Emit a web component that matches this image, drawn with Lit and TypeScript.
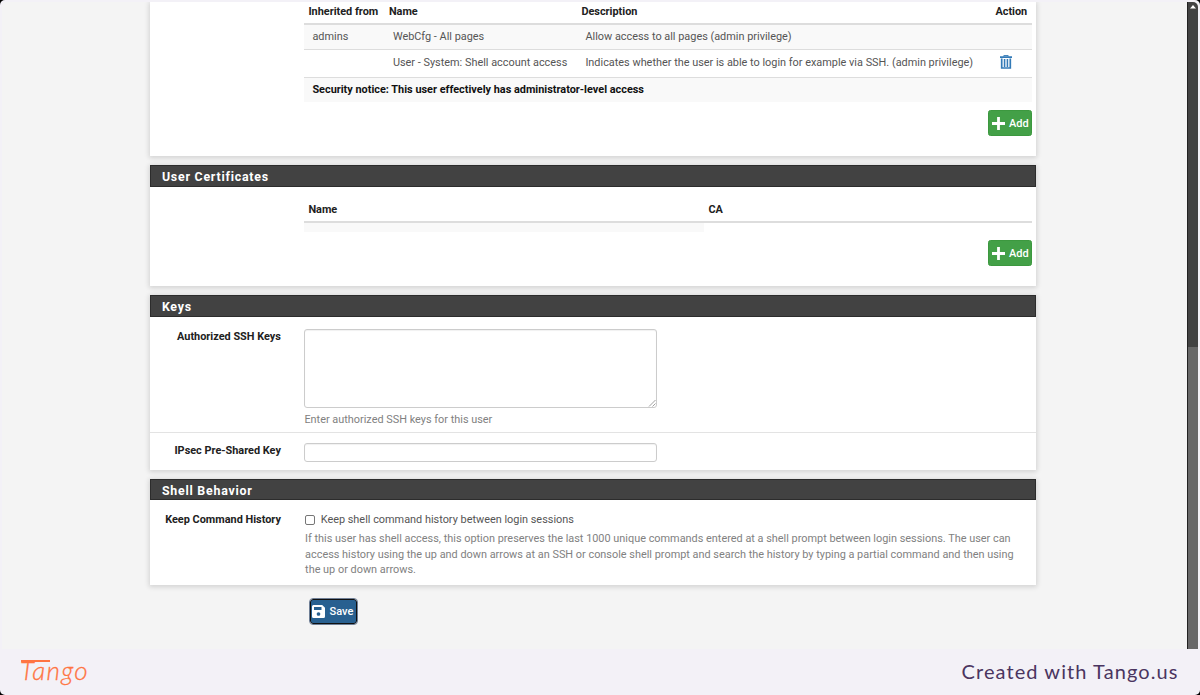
import { LitElement, html, css, svg } from "lit";
import { customElement, property } from "lit/decorators.js";

const plus = svg`<path d="M5.1 0h2.8v5.1H13v2.8H7.900V13H5.100V7.900H0V5.100h5.100z" fill="#fff"/>`;

@customElement("form-panel")
class FormPanel extends LitElement {
  @property() heading = "";
  static styles = css`
    :host { display: block; background: #fff; box-shadow: 0 1px 5px 1px rgba(0, 0, 0, 0.14); }
    .heading {
      box-sizing: border-box; height: 21.5px; background: #424242;
      border: 1px solid #2c2c2c; color: #fff; padding-left: 10.500px;
      font-size: 12.4px; font-weight: 700; line-height: 21px; letter-spacing: 0.76px;
    }
  `;
  render() {
    return html`${this.heading ? html`<div class="heading">${this.heading}</div>` : ""}<slot></slot>`;
  }
}

@customElement("add-button")
class AddButton extends LitElement {
  static styles = css`
    :host { display: block; }
    .btn {
      box-sizing: border-box; width: 44.500px; height: 26.500px; display: flex; align-items: center;
      padding: 0 0 0 3px; gap: 4px; border: 1px solid #3c983f; border-radius: 2.500px;
      background: #43a047; color: #fff; font: 500 11px Roboto, sans-serif; letter-spacing: 0.1px;
    }
    svg { width: 13px; height: 13px; display: block; flex: none; }
  `;
  render() {
    return html`<button class="btn"><svg viewBox="0 0 13 13">${plus}</svg>Add</button>`;
  }
}

@customElement("app-root")
class AppRoot extends LitElement {
  static styles = css`
    * { box-sizing: border-box; }
    :host { display: block; height: 695px; background: #000; font-family: Roboto, sans-serif; font-size: 10.9px; color: #555; }
    .frame { height: 695px; display: flex; flex-direction: column; background: #f3f1f7; border-radius: 5px; overflow: hidden; padding: 2px 2px 0; }
    .view { height: 647px; display: flex; background: #f4f4f4; border-radius: 5px 5px 0 0; overflow: hidden; }
    .page { flex: 1; padding-left: 148.400px; }
    .content { width: 886px; display: flex; flex-direction: column; }
    .p1 { height: 154px; margin-bottom: 9.300px; }
    .p2 { height: 121px; margin-bottom: 9px; }
    .p3 { height: 175px; margin-bottom: 8.500px; }
    .p4 { height: 106px; }
    .table { margin: 0 4px 0 154px; }
    .row { display: grid; grid-template-columns: 80.500px 192.500px 414px 1fr; height: 26px; align-items: center; border-top: 1px solid #ddd; padding-bottom: 1px; }
    .row > span { padding-left: 8px; white-space: nowrap; }
    .odd { background: #f9f9f9; }
    .head { height: 21px; color: #212121; font-weight: 700; border: 0; padding-bottom: 3px; }
    .head > span { padding-left: 4px; }
    .first { border-top: 2px solid #ddd; height: 26.300px; }
    .shell { height: 27.500px; padding-bottom: 3px; }
    .notice { display: flex; height: 25.500px; color: #111; font-weight: 700; }
    .trash { width: 12px; height: 14px; display: block; margin: 0 0 0 0.600px; }
    .actions { display: flex; justify-content: flex-end; padding: 7.500px 4px 0 0; }
    .certs { padding-top: 12px; }
    .certs .row { grid-template-columns: 400px 1fr; }
    .certs .head { height: 22.500px; padding: 0 0 1px; }
    .certs .none { height: 11px; padding: 0; background: none; border-top: 2px solid #ddd; align-items: stretch; }
    .field { display: grid; grid-template-columns: 130.500px 1fr; column-gap: 23.500px; line-height: 15.500px; }
    .label { text-align: right; font-weight: 700; color: #212121; }
    .f1 { padding-top: 12px; height: 115px; }
    .f1 .label { margin-top: -0.300px; }
    .f2 { padding-top: 10.500px; border-top: 1px solid #e3e3e3; }
    .f2 .label { margin-top: 0; }
    textarea, .text { display: block; width: 353px; background: #fff; border: 1px solid #ccc; border-radius: 3px; box-shadow: inset 0 1px 1px rgba(0, 0, 0, 0.06); margin: 0; padding: 4px; outline: none; }
    textarea { height: 79.500px; resize: none; }
    .area { position: relative; width: 353px; }
    .grip { position: absolute; right: 1px; bottom: 1px; width: 8px; height: 8px; }
    .text { height: 19px; }
    .help { color: #818181; }
    .area + .help { margin-top: 3.500px; }
    .f4 { padding-top: 11.500px; }
    .check { display: flex; align-items: center; gap: 5.500px; }
    .check input { appearance: none; width: 10px; height: 10px; margin: 1.500px 0 0 0.800px; border: 1px solid #767676; border-radius: 2px; background: #fff; }
    .f4 .help { margin: 4px 0 0 0.700px; white-space: nowrap; }
    .save {
      width: 47px; height: 25px; margin: 14.200px 0 0 159.600px; padding: 0 0 0 1.500px; display: flex; align-items: center; gap: 4px;
      border: 1.500px solid #101010; border-radius: 3px; outline: 1px solid #6f7f96; background: #286090; color: #fff;
      font: 500 11px Roboto, sans-serif; white-space: nowrap;
    }
    .save svg { width: 13px; height: 13px; flex: none; }
    .scroll { width: 11.500px; background: #424242; border-left: 1px solid #222; display: flex; flex-direction: column; }
    .track { height: 345px; display: flex; justify-content: center; padding-top: 2px; }
    .track svg { width: 6px; height: 5px; }
    .thumb { flex: 1; background: #686868; }
    .footer { flex: 1; display: flex; align-items: center; justify-content: space-between; padding: 0 19.500px 0 18px; color: #4a3560; }
    .tango { position: relative; color: #ff7442; font: italic 300 26px Lato, sans-serif; letter-spacing: 1.300px; padding-bottom: 4px; -webkit-text-stroke: 0.300px #ff7442; }
    .tango::before { content: ""; position: absolute; left: 1px; top: 6px; width: 29px; height: 2px; background: #ff7442; }
    .credit { font: 400 20px Lato, sans-serif; letter-spacing: 1.08px; padding-bottom: 3px; }
  `;

  privileges = [
    ["admins", "WebCfg - All pages", "Allow access to all pages (admin privilege)"],
    ["", "User - System: Shell account access", "Indicates whether the user is able to login for example via SSH. (admin privilege)"],
  ];

  render() {
    return html`<div class="frame">
      <div class="view">
        <div class="page"><div class="content">
          <form-panel class="p1">
            <div class="table">
              <div class="row head"><span>Inherited from</span><span>Name</span><span>Description</span><span>Action</span></div>
              ${this.privileges.map((p, i) => html`<div class="row ${i ? "shell" : "odd first"}">
                ${p.map((c) => html`<span>${c}</span>`)}
                <span>${i ? html`<svg class="trash" viewBox="0 0 12 14" fill="none" stroke="#337ab7">
                  <path d="M0 2.200h12" stroke-width="1.700"/><path d="M3.800 1.500V.6h4.400v.9"/>
                  <path d="M1.700 3.500v9.500h8.600V3.500" stroke-width="1.700"/><path d="M4.400 4v8M7.600 4v8" stroke-width="1.200"/><path d="M6 4v8" stroke-width=".7"/>
                </svg>` : ""}</span></div>`)}
              <div class="row odd notice"><span>Security notice: This user effectively has administrator-level access</span></div>
            </div>
            <div class="actions"><add-button></add-button></div>
          </form-panel>
          <form-panel class="p2" heading="User Certificates">
            <div class="table certs">
              <div class="row head"><span>Name</span><span>CA</span></div>
              <div class="row none"><span class="odd"></span><span></span></div>
            </div>
            <div class="actions"><add-button></add-button></div>
          </form-panel>
          <form-panel class="p3" heading="Keys">
            <div class="field f1"><div class="label">Authorized SSH Keys</div><div>
              <div class="area"><textarea></textarea><svg class="grip" viewBox="0 0 8 8" stroke="#888" fill="none"><path d="M1 7.500 7.500 1M4.500 7.500l3-3" stroke-width=".8"/></svg></div>
              <div class="help">Enter authorized SSH keys for this user</div></div></div>
            <div class="field f2"><div class="label">IPsec Pre-Shared Key</div><input class="text" type="text"></div>
          </form-panel>
          <form-panel class="p4" heading="Shell Behavior">
            <div class="field f4"><div class="label">Keep Command History</div><div>
              <label class="check"><input type="checkbox">Keep shell command history between login sessions</label>
              <div class="help">If this user has shell access, this option preserves the last 1000 unique commands entered at a shell prompt between login sessions. The user can<br>access history using the up and down arrows at an SSH or console shell prompt and search the history by typing a partial command and then using<br>the up or down arrows.</div>
            </div></div>
          </form-panel>
          <button class="save"><svg viewBox="0 0 13 13"><path fill="#fff" fill-rule="evenodd" d="M1.500 0h8.700L13 2.800v8.700a1.500 1.500 0 0 1-1.500 1.500h-10A1.500 1.500 0 0 1 0 11.500v-10A1.500 1.500 0 0 1 1.500 0ZM2 2v3h7.500V2ZM6.500 7.200a1.800 1.800 0 1 0 .01 0Z"/></svg>Save</button>
        </div></div>
        <div class="scroll"><div class="track"><svg viewBox="0 0 6 5"><path d="M3 1 6 4.500H0z" fill="#fff"/></svg></div><div class="thumb"></div></div>
      </div>
      <div class="footer"><div class="tango">Tango</div><div class="credit">Created with Tango.us</div></div>
    </div>`;
  }
}
